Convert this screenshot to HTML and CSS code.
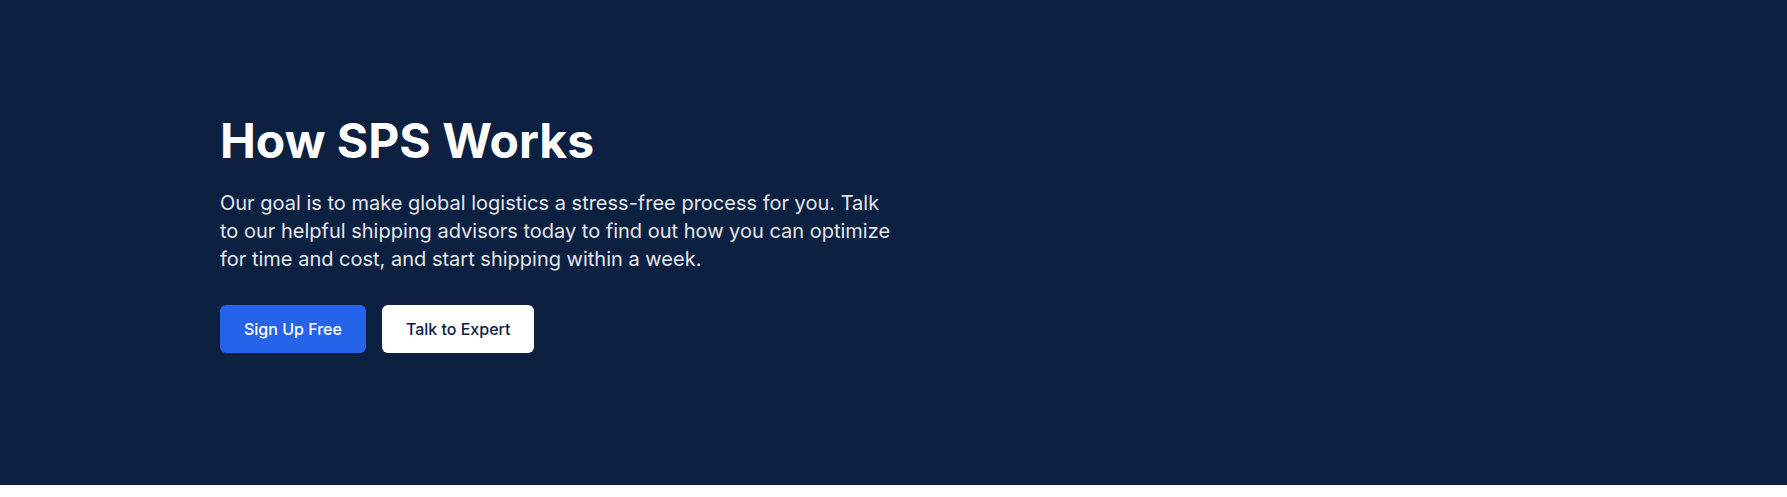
FILE: index.html
```html
<!DOCTYPE html>
<html lang="en">
<head>
<meta charset="utf-8">
<title>How SPS Works</title>
<link rel="stylesheet" href="styles.css">
</head>
<body>
<section class="hero">
  <div class="hero-inner">
    <h1 class="hero-title">How SPS Works</h1>
    <p class="hero-text">Our goal is to make global logistics a stress-free process for you. Talk to our helpful shipping advisors today to find out how you can optimize for time and cost, and start shipping within a week.</p>
    <div class="hero-actions">
      <a class="btn btn-primary" href="#">Sign Up Free</a>
      <a class="btn btn-secondary" href="#">Talk to Expert</a>
    </div>
  </div>
</section>
</body>
</html>
```

FILE: styles.css
```css
* { box-sizing: border-box; }
html, body { margin: 0; padding: 0; }
body {
  font-family: Inter, "Noto Sans", sans-serif;
  background: #ffffff;
}
.hero {
  background: #0c2142;
  height: 485px;
  padding: 117px 0 0 220px;
}
.hero-inner {
  display: flex;
  flex-direction: column;
  align-items: flex-start;
}
.hero-title {
  margin: 0;
  font-size: 48px;
  line-height: 48px;
  font-weight: 700;
  color: #ffffff;
}
.hero-text {
  margin: 24px 0 0;
  max-width: 672px;
  font-size: 20px;
  line-height: 28px;
  color: #e5e7eb;
}
.hero-actions {
  display: flex;
  gap: 16px;
  margin-top: 32px;
}
.btn {
  display: inline-block;
  padding: 12px 24px;
  font-size: 16px;
  line-height: 24px;
  font-weight: 500;
  border-radius: 6px;
  text-decoration: none;
}
.btn-primary {
  background: #2563eb;
  color: #ffffff;
}
.btn-secondary {
  background: #ffffff;
  color: #0c2142;
}
```
